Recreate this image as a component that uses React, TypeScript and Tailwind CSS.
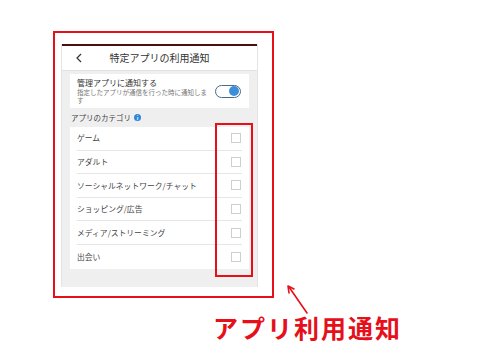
import React from 'react';

const categories = ['ゲーム', 'アダルト', 'ソーシャルネットワーク/チャット', 'ショッピング/広告', 'メディア/ストリーミング', '出会い'];

const Toggle: React.FC = () => (
  <div className="w-[26px] h-[13px] rounded-full border-[1.5px] border-[#4a6a8a] bg-white flex items-center justify-end pr-[1px]">
    <div className="w-[10px] h-[10px] rounded-full bg-[#3a8fd8]" />
  </div>
);

const App: React.FC = () => {
  return (
    <div className="relative w-[500px] h-[350px] bg-white overflow-hidden font-['Noto_Sans_CJK_JP','Noto_Sans',sans-serif]">
      {/* outer annotation frame */}
      <div className="ml-[53px] mt-[31px] w-[221px] h-[267px] border-2 border-[#e60f1a] pt-[11px] pl-[6px]">
        <div className="w-[197px] h-[243px] bg-[#efefef] border-x border-[#e4e4e4] flex flex-col">
          <div className="h-[2px] bg-[#4a1010]" />
          <div className="h-[25px] bg-white flex items-center px-[13px] border-b border-[#e2e2e2]">
            <svg width="10" height="10" viewBox="0 0 10 10" className="shrink-0">
              <path d="M6 1 L2 5 L6 9" stroke="#333" strokeWidth="1.2" fill="none" />
            </svg>
            <span className="flex-1 text-center text-[10px] text-[#333] leading-none pr-[10px]">特定アプリの利用通知</span>
          </div>

          <div className="px-[8px] pt-[3px] flex flex-col">
            <div className="bg-white h-[34px] flex items-center pl-[7px] pr-[8px]">
              <div className="flex-1 flex flex-col gap-[1px]">
                <div className="text-[8px] text-[#333] leading-[10px]">管理アプリに通知する</div>
                <div className="text-[6.5px] text-[#777] leading-[7.5px] w-[133px]">指定したアプリが通信を行った時に通知します</div>
              </div>
              <Toggle />
            </div>

            <div className="h-[19px] flex items-center pl-[1px] gap-[3px]">
              <span className="text-[7.5px] text-[#444] leading-none">アプリのカテゴリ</span>
              <span className="w-[7px] h-[7px] rounded-full bg-[#2c88d9] text-white text-[5px] font-bold leading-none flex items-center justify-center">i</span>
            </div>

            <div className="relative bg-white px-[7px]">
              {categories.map((c, i) => (
                <div
                  key={c}
                  className={`h-[23.6px] flex items-center justify-between ${i < categories.length - 1 ? 'border-b border-[#e6e6e6]' : ''}`}
                >
                  <span className="text-[7.8px] text-[#444] leading-none">{c}</span>
                  <span className="w-[10px] h-[10px] border border-[#cfcfcf] bg-white mr-[1px]" />
                </div>
              ))}
              {/* inner highlight around checkboxes */}
              <div className="absolute right-[-4px] top-[-4px] w-[38px] h-[154px] border-2 border-[#e60f1a]" />
            </div>
          </div>
        </div>
      </div>

      {/* arrow */}
      <svg className="absolute left-[282px] top-[281px]" width="32" height="36" viewBox="0 0 32 36">
        <path d="M25 32 L7 6" stroke="#e60f1a" strokeWidth="1.6" fill="none" strokeLinecap="round" />
        <path d="M6 5 L7 12 M6 5 L12 8" stroke="#e60f1a" strokeWidth="1.6" fill="none" strokeLinecap="round" />
      </svg>

      <div className="ml-[213px] mt-[17px] text-[25px] leading-none font-bold text-[#e60f1a] tracking-[2px]">アプリ利用通知</div>
    </div>
  );
};

export default App;
